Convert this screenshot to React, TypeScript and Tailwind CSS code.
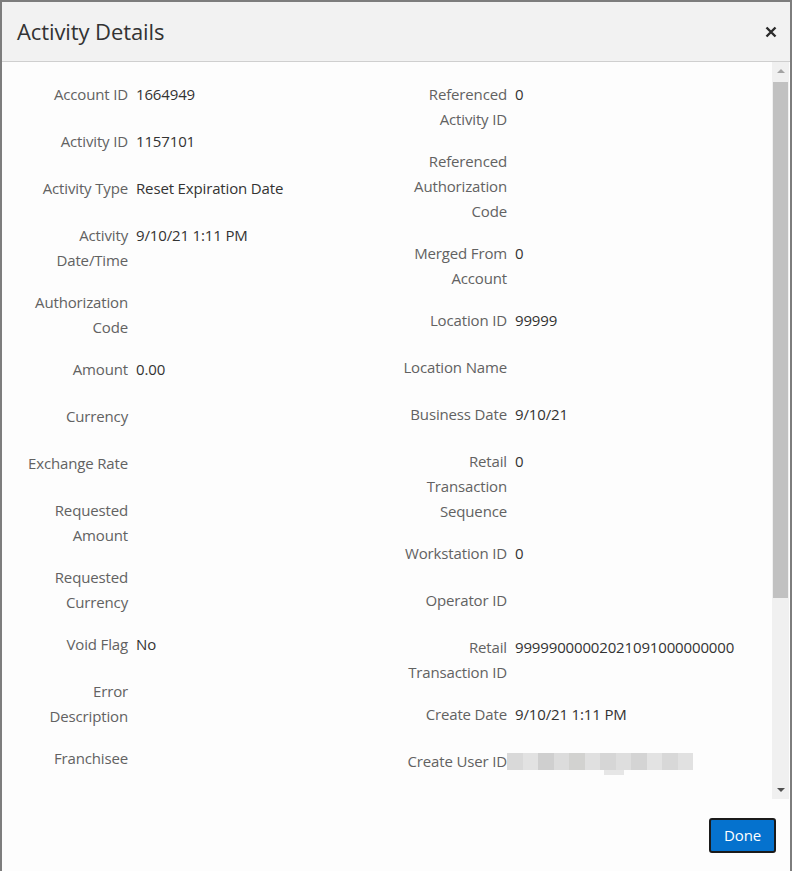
type Field = { label: string; value?: string; redacted?: boolean };

const LEFT: Field[] = [
  { label: "Account ID", value: "1664949" },
  { label: "Activity ID", value: "1157101" },
  { label: "Activity Type", value: "Reset Expiration Date" },
  { label: "Activity Date/Time", value: "9/10/21 1:11 PM" },
  { label: "Authorization Code" },
  { label: "Amount", value: "0.00" },
  { label: "Currency" },
  { label: "Exchange Rate" },
  { label: "Requested Amount" },
  { label: "Requested Currency" },
  { label: "Void Flag", value: "No" },
  { label: "Error Description" },
  { label: "Franchisee" },
];

const RIGHT: Field[] = [
  { label: "Referenced Activity ID", value: "0" },
  { label: "Referenced Authorization Code" },
  { label: "Merged From Account", value: "0" },
  { label: "Location ID", value: "99999" },
  { label: "Location Name" },
  { label: "Business Date", value: "9/10/21" },
  { label: "Retail Transaction Sequence", value: "0" },
  { label: "Workstation ID", value: "0" },
  { label: "Operator ID" },
  { label: "Retail Transaction ID", value: "99999000002021091000000000" },
  { label: "Create Date", value: "9/10/21 1:11 PM" },
  { label: "Create User ID", redacted: true },
];

// pixelated blur over the user id
const BLUR = ["#d9d9d9", "#e2e2e2", "#cfcfcf", "#dcdcdc", "#d2d2d0", "#e0e0e0", "#d6d6d6", "#dedede", "#d4d4d4", "#e3e3e3", "#d8d8d8", "#e1e1e1"];

function Redacted() {
  return (
    <div className="relative flex h-[17px] mt-[4px] -ml-[8px]">
      {BLUR.map((c, i) => (
        <div key={i} className="w-[15.5px] h-full" style={{ background: c }} />
      ))}
      <div className="absolute left-[97px] top-[17px] w-[20px] h-[5px] bg-[#e6e6e6]" />
    </div>
  );
}

function Row({ f }: { f: Field }) {
  return (
    <div className="flex gap-[8px] min-h-[47px] pb-[17px] leading-[25px]">
      <div className="w-[111px] shrink-0 text-right text-[#626262]">{f.label}</div>
      <div className="text-[#333333]">{f.redacted ? <Redacted /> : f.value}</div>
    </div>
  );
}

export default function App() {
  return (
    <div
      className="w-[792px] h-[871px] flex flex-col bg-[#fdfdfd] border-x-2 border-t-2 border-[#7d7d7d] overflow-hidden text-[15px] tracking-[-0.15px]"
      style={{ fontFamily: '"Open Sans", "Noto Sans", sans-serif' }}
    >
      {/* Header */}
      <div className="h-[60px] shrink-0 flex items-center justify-between pl-[15px] pr-[13px] bg-[#f2f2f2] border-b border-[#cfcfcf]">
        <h1 className="text-[22px] text-[#333333] tracking-[-0.1px]">Activity Details</h1>
        <svg width="12" height="12" viewBox="0 0 12 12">
          <path d="M1.5 1.5 L10.5 10.5 M10.5 1.5 L1.5 10.5" stroke="#2b2b2b" strokeWidth="2.4" />
        </svg>
      </div>

      {/* Body */}
      <div className="h-[737px] shrink-0 flex">
        <div className="flex-1 overflow-hidden pl-[15px] pt-[20px] grid grid-cols-[379px_1fr] content-start">
          <div className="flex flex-col">
            {LEFT.map((f) => (
              <Row key={f.label} f={f} />
            ))}
          </div>
          <div className="flex flex-col">
            {RIGHT.map((f) => (
              <Row key={f.label} f={f} />
            ))}
          </div>
        </div>

        {/* Scrollbar */}
        <div className="w-[17px] mr-[1px] bg-[#f0f0f0] flex flex-col items-center">
          <div className="h-[18px] flex items-center justify-center">
            <div className="w-0 h-0 border-x-[4px] border-x-transparent border-b-[4px] border-b-[#a3a3a3]" />
          </div>
          <div className="w-[15px] h-[516px] mt-[2px] bg-[#c1c1c1]" />
          <div className="flex-1" />
          <div className="h-[18px] flex items-center justify-center">
            <div className="w-0 h-0 border-x-[4px] border-x-transparent border-t-[4px] border-t-[#505050]" />
          </div>
        </div>
      </div>

      {/* Footer */}
      <div className="flex-1 flex justify-end items-start pt-[19px] pr-[14px] bg-[#fdfdfd]">
        <button className="w-[67px] h-[35px] rounded-[3px] border-2 border-[#1b1b1b] bg-[#0572ce] text-white text-[15px]">
          Done
        </button>
      </div>
    </div>
  );
}
